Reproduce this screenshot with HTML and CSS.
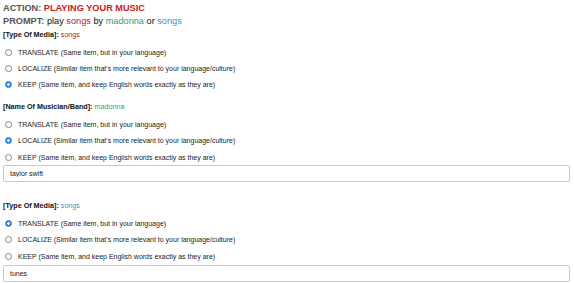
FILE: index.html
```html
<!DOCTYPE html>
<html lang="en">

<head>
    <meta charset="UTF-8">
    <meta name="viewport" content="width=device-width, initial-scale=1.0">
    <title>Playing Your Music</title>
    <link rel="stylesheet" href="styles.css">
</head>

<body>
    <div class="header">
        <div class="action"><span class="key">ACTION:</span> <span class="red">PLAYING YOUR MUSIC</span></div>
        <div class="prompt"><span class="key">PROMPT:</span> play <span class="maroon">songs</span> by <span class="green">madonna</span> or <span class="blue">songs</span></div>
    </div>

    <div class="section">
        <div class="field-label">[Type Of Media]: <span class="maroon">songs</span></div>
        <div class="options">
            <label class="option"><input type="radio" name="media1"> TRANSLATE (Same item, but in your language)</label>
            <label class="option"><input type="radio" name="media1"> LOCALIZE (Similar item that's more relevant to your language/culture)</label>
            <label class="option"><input type="radio" name="media1" checked> KEEP (Same item, and keep English words exactly as they are)</label>
        </div>
    </div>

    <div class="section">
        <div class="field-label">[Name Of Musician/Band]: <span class="green">madonna</span></div>
        <div class="options">
            <label class="option"><input type="radio" name="artist"> TRANSLATE (Same item, but in your language)</label>
            <label class="option"><input type="radio" name="artist" checked> LOCALIZE (Similar item that's more relevant to your language/culture)</label>
            <label class="option"><input type="radio" name="artist"> KEEP (Same item, and keep English words exactly as they are)</label>
        </div>
        <input class="answer" type="text" value="taylor swift">
    </div>

    <div class="section">
        <div class="field-label">[Type Of Media]: <span class="blue">songs</span></div>
        <div class="options">
            <label class="option"><input type="radio" name="media2" checked> TRANSLATE (Same item, but in your language)</label>
            <label class="option"><input type="radio" name="media2"> LOCALIZE (Similar item that's more relevant to your language/culture)</label>
            <label class="option"><input type="radio" name="media2"> KEEP (Same item, and keep English words exactly as they are)</label>
        </div>
        <input class="answer" type="text" value="tunes">
    </div>
</body>

</html>
```

FILE: styles.css
```css
body {
    font-family: "Liberation Sans", Arial, sans-serif;
    margin: 0;
    padding: 3px 4px 0 3px;
    background-color: #fff;
    color: #111;
}

.header {
    display: flex;
    flex-direction: column;
    gap: 2px;
}

.action,
.prompt {
    font-size: 9.2px;
    line-height: 11px;
}

.action {
    font-weight: bold;
}

.key {
    font-weight: bold;
    color: #555;
}

.red {
    color: #d0161b;
}

.maroon {
    color: #a8243c;
}

.green {
    color: #3d9b5b;
}

.blue {
    color: #3b95c9;
}

.section {
    display: flex;
    flex-direction: column;
    margin-top: 9px;
}

.header + .section {
    margin-top: 3px;
}

.field-label {
    font-size: 7.2px;
    font-weight: bold;
    line-height: 9px;
    color: #111;
}

.field-label span {
    font-weight: normal;
}

.options {
    display: flex;
    flex-direction: column;
    margin-top: 5px;
}

.option {
    display: flex;
    align-items: center;
    gap: 6px;
    height: 16.4px;
    font-size: 7px;
    color: #222;
    padding-left: 2px;
}

.option input[type="radio"] {
    appearance: none;
    -webkit-appearance: none;
    width: 7px;
    height: 7px;
    margin: 0;
    border: 1px solid #888;
    border-radius: 50%;
    background-color: #fff;
    box-sizing: border-box;
}

.option input[type="radio"]:checked {
    border-color: #2f7de1;
    background: radial-gradient(circle, #fff 0 1.2px, #2f7de1 1.5px);
}

.answer {
    margin: 0 0 10px 0;
    height: 17px;
    box-sizing: border-box;
    border: 1px solid #c8c8c8;
    border-radius: 2px;
    padding: 0 6px;
    font-family: "Liberation Sans", Arial, sans-serif;
    font-size: 7px;
    color: #222;
    width: 100%;
}
```
